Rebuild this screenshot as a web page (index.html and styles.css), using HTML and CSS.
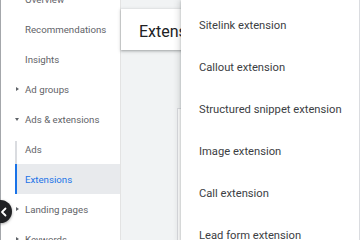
FILE: index.html
```html
<!DOCTYPE html>
<html>
<head>
<meta charset="utf-8">
<link rel="stylesheet" href="styles.css">
</head>
<body>
<div class="app">
  <nav class="sidebar">
    <ul class="nav">
      <li class="nav-item"><span class="arrow-slot"></span>Overview</li>
      <li class="nav-item"><span class="arrow-slot"></span>Recommendations</li>
      <li class="nav-item"><span class="arrow-slot"></span>Insights</li>
      <li class="nav-item"><span class="arrow-slot"><span class="tri-right"></span></span>Ad groups</li>
      <li class="nav-item"><span class="arrow-slot"><span class="tri-down"></span></span>Ads &amp; extensions</li>
      <li class="sub-item sub-first">Ads</li>
      <li class="sub-item sub-active">Extensions</li>
      <li class="nav-item"><span class="arrow-slot"><span class="tri-right"></span></span>Landing pages</li>
      <li class="nav-item"><span class="arrow-slot"><span class="tri-right"></span></span>Keywords</li>
    </ul>
  </nav>
  <main class="main">
    <header class="page-header">Extensions</header>
    <section class="content-card"></section>
  </main>
</div>
<button class="collapse-btn" aria-label="Collapse">
  <svg width="10" height="10" viewBox="0 0 10 10"><path d="M6.5 1.5 L3 5 L6.5 8.5" fill="none" stroke="#fff" stroke-width="1.8" stroke-linecap="round" stroke-linejoin="round"/></svg>
</button>
<ul class="menu">
  <li class="menu-item">Sitelink extension</li>
  <li class="menu-item">Callout extension</li>
  <li class="menu-item">Structured snippet extension</li>
  <li class="menu-item">Image extension</li>
  <li class="menu-item">Call extension</li>
  <li class="menu-item">Lead form extension</li>
</ul>
</body>
</html>
```
FILE: styles.css
```css
* { box-sizing: border-box; }
html, body {
  margin: 0;
  padding: 0;
  width: 360px;
  height: 240px;
  overflow: hidden;
  font-family: Roboto, "Noto Sans", sans-serif;
}
ul { list-style: none; margin: 0; padding: 0; }

.app {
  display: flex;
  height: 240px;
  border-left: 1px solid #a4a7ab;
}

.sidebar {
  width: 120px;
  flex: none;
  background: #fff;
  border-right: 1px solid #e3e3e3;
  overflow: hidden;
}
.nav { margin-top: -16px; }
.nav-item {
  height: 30px;
  display: flex;
  align-items: center;
  padding-left: 13px;
  font-size: 9.7px;
  color: #5f6368;
  white-space: nowrap;
}
.arrow-slot {
  width: 11px;
  flex: none;
  display: flex;
  align-items: center;
}
.tri-right {
  width: 0; height: 0;
  margin-left: 2px;
  border-top: 2.5px solid transparent;
  border-bottom: 2.5px solid transparent;
  border-left: 3px solid #5f6368;
}
.tri-down {
  width: 0; height: 0;
  margin-left: 0.5px;
  border-left: 2.5px solid transparent;
  border-right: 2.5px solid transparent;
  border-top: 3px solid #5f6368;
}
.sub-item {
  height: 30px;
  display: flex;
  align-items: center;
  margin-left: 14px;
  padding-left: 8px;
  border-left: 2px solid #dadce0;
  font-size: 9.7px;
  color: #5f6368;
}
.sub-first {
  border-image: linear-gradient(to bottom, transparent 8px, #dadce0 8px) 1;
}
.sub-active {
  background: #e8eaed;
  border-left-color: #1a73e8;
  color: #1a73e8;
}

.main {
  flex: 1;
  background: #f1f3f4;
  display: flex;
  flex-direction: column;
}
.page-header {
  margin-top: 9px;
  height: 41px;
  flex: none;
  background: #fff;
  display: flex;
  align-items: center;
  padding: 3px 0 0 18px;
  font-size: 16px;
  color: #202124;
  box-shadow: 0 1px 2px rgba(60,64,67,.3), 0 1px 3px 1px rgba(60,64,67,.15);
}
.content-card {
  flex: 1;
  margin: 58px 0 0 56px;
  background: #fff;
  border-left: 1px solid #dadce0;
  border-top: 1px solid #dadce0;
}

.collapse-btn {
  position: absolute;
  left: -11px;
  top: 200px;
  width: 23px;
  height: 23px;
  border-radius: 50%;
  border: none;
  padding: 0 0 0 10px;
  background: #202124;
  box-shadow: 0 1px 3px rgba(0,0,0,.35);
  display: flex;
  align-items: center;
}
.collapse-btn svg { display: block; }

.menu {
  position: absolute;
  left: 181px;
  top: 0;
  width: 179px;
  height: 240px;
  background: #fff;
  padding-top: 4px;
  border-right: 1px solid #dadce0;
  box-shadow: 0 2px 6px 2px rgba(60,64,67,.18), 0 1px 2px rgba(60,64,67,.3);
}
.menu-item {
  height: 42px;
  display: flex;
  align-items: center;
  padding-left: 18px;
  font-size: 11.2px;
  color: #3c4043;
  white-space: nowrap;
}
```
